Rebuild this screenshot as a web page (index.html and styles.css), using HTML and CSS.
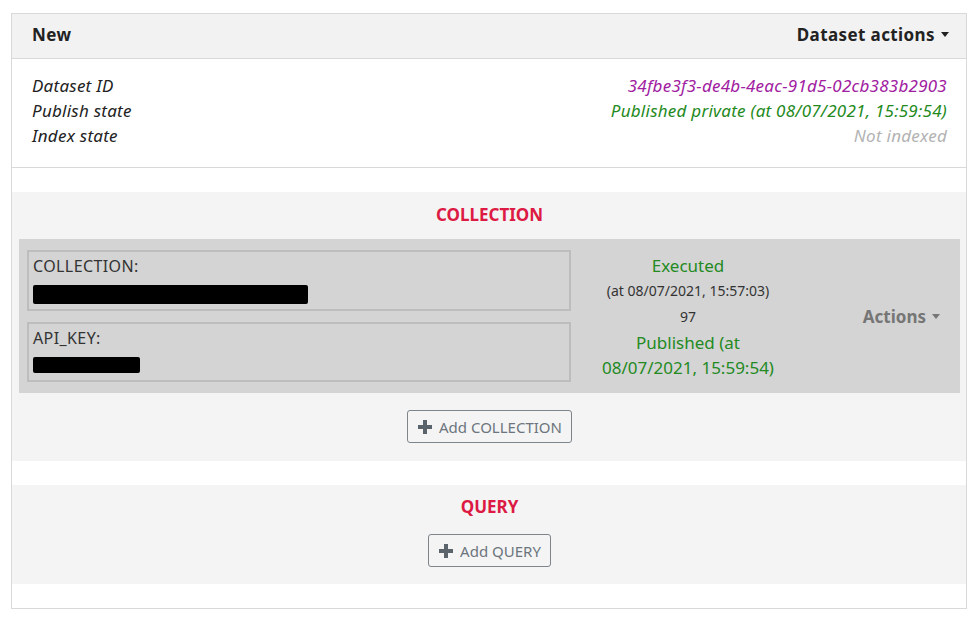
FILE: index.html
```html
<!DOCTYPE html>
<html lang="en">
<head>
<meta charset="utf-8">
<title>Dataset</title>
<link rel="stylesheet" href="styles.css">
</head>
<body>
<div class="card">
  <div class="card-header">
    <span class="title">New</span>
    <span class="dropdown">Dataset actions <span class="caret"></span></span>
  </div>
  <div class="meta">
    <div class="meta-row"><span>Dataset ID</span><span class="purple">34fbe3f3-de4b-4eac-91d5-02cb383b2903</span></div>
    <div class="meta-row"><span>Publish state</span><span class="green">Published private (at 08/07/2021, 15:59:54)</span></div>
    <div class="meta-row"><span>Index state</span><span class="muted">Not indexed</span></div>
  </div>
  <div class="spacer"></div>
  <section class="group">
    <h2 class="group-title">COLLECTION</h2>
    <div class="item">
      <div class="fields">
        <div class="field">
          <div class="field-label">COLLECTION:</div>
          <div class="redact redact-long"></div>
        </div>
        <div class="field">
          <div class="field-label">API_KEY:</div>
          <div class="redact redact-short"></div>
        </div>
      </div>
      <div class="status">
        <div class="green big">Executed</div>
        <div class="small">(at 08/07/2021, 15:57:03)</div>
        <div class="small">97</div>
        <div class="green big">Published (at 08/07/2021, 15:59:54)</div>
      </div>
      <div class="actions">Actions <span class="caret"></span></div>
    </div>
    <div class="btn-row">
      <button class="btn"><svg class="plus" viewBox="0 0 14 14" width="14" height="14"><path d="M5 0h4v5h5v4H9v5H5V9H0V5h5z"/></svg>Add COLLECTION</button>
    </div>
  </section>
  <div class="spacer"></div>
  <section class="group group-small">
    <h2 class="group-title">QUERY</h2>
    <div class="btn-row btn-row-q">
      <button class="btn"><svg class="plus" viewBox="0 0 14 14" width="14" height="14"><path d="M5 0h4v5h5v4H9v5H5V9H0V5h5z"/></svg>Add QUERY</button>
    </div>
  </section>
  <div class="spacer"></div>
</div>
</body>
</html>
```

FILE: styles.css
```css
* { box-sizing: border-box; }
body {
  margin: 0;
  padding: 13px 8px 0 11px;
  font-family: "Noto Sans", "Open Sans", sans-serif;
  font-size: 16px;
  color: #222;
  background: #fff;
}
.card {
  border: 1px solid #d9d9d9;
  background: #fff;
}
.card-header {
  display: flex;
  justify-content: space-between;
  align-items: center;
  height: 45px;
  padding: 0 17px 4px 20px;
  background: #f2f2f2;
  border-bottom: 1px solid #d9d9d9;
  font-weight: 700;
  font-size: 17px;
  letter-spacing: 0.4px;
  color: #222;
}
.dropdown { display: flex; align-items: center; gap: 4px; }
.caret {
  display: inline-block;
  width: 0; height: 0;
  border-left: 4.5px solid transparent;
  border-right: 4.5px solid transparent;
  border-top: 5px solid currentColor;
  margin-left: 2px;
}
.meta {
  padding: 14px 19px 19px 20px;
  border-bottom: 1px solid #d9d9d9;
  font-style: italic;
  font-size: 17px;
  letter-spacing: 0.25px;
  color: #222;
}
.meta-row {
  display: flex;
  justify-content: space-between;
  line-height: 25px;
}
.purple { color: #a0209f; }
.green { color: #238a22; }
.muted { color: #b3b3b3; }
.spacer { height: 24px; }
.group {
  background: #f4f4f4;
  padding: 10px 6px 18px 7px;
}
.group-small { padding: 9px 6px 17px 7px; }
.group-title {
  margin: 0 0 12px;
  text-align: center;
  color: #dc1a43;
  font-size: 17px;
  font-weight: 700;
  line-height: 25px;
}
.group-small .group-title { margin-bottom: 15px; }
.item {
  display: grid;
  grid-template-columns: 552px 1fr 155px;
  align-items: center;
  background: #d4d4d4;
  padding: 11px 0 11px 8px;
}
.fields { display: flex; flex-direction: column; gap: 11px; }
.field {
  border: 2px solid #bdbdbd;
  height: 61px;
  padding: 2px 2px 0 4px;
  width: 544px;
}
.field + .field { height: 60px; }
.field-label {
  font-size: 16px;
  letter-spacing: 0.4px;
  color: #333;
  line-height: 24px;
}
.redact {
  background: #000;
  border-radius: 2px;
  height: 19px;
  margin-top: 7px;
}
.redact-long { width: 275px; }
.redact-short { width: 107px; height: 16px; }
.status {
  text-align: center;
  line-height: 25px;
  padding: 0 24px 0 16px;
}
.status .small { line-height: 26px; }
.big { font-size: 17px; }
.small { font-size: 14px; color: #333; }
.actions {
  display: flex;
  align-items: center;
  justify-content: flex-end;
  gap: 4px;
  padding-right: 20px;
  font-weight: 700;
  font-size: 17px;
  color: #767676;
}
.btn-row {
  display: flex;
  justify-content: center;
  margin-top: 17px;
}
.btn-row-q { margin-top: 0; }
.btn {
  display: inline-flex;
  align-items: center;
  gap: 7px;
  height: 33px;
  padding: 0 9px 0 10px;
  background: transparent;
  border: 1px solid #7d848a;
  border-radius: 3px;
  font-family: inherit;
  font-size: 15px;
  color: #6c757d;
}
.plus { fill: #5c646b; }
```
